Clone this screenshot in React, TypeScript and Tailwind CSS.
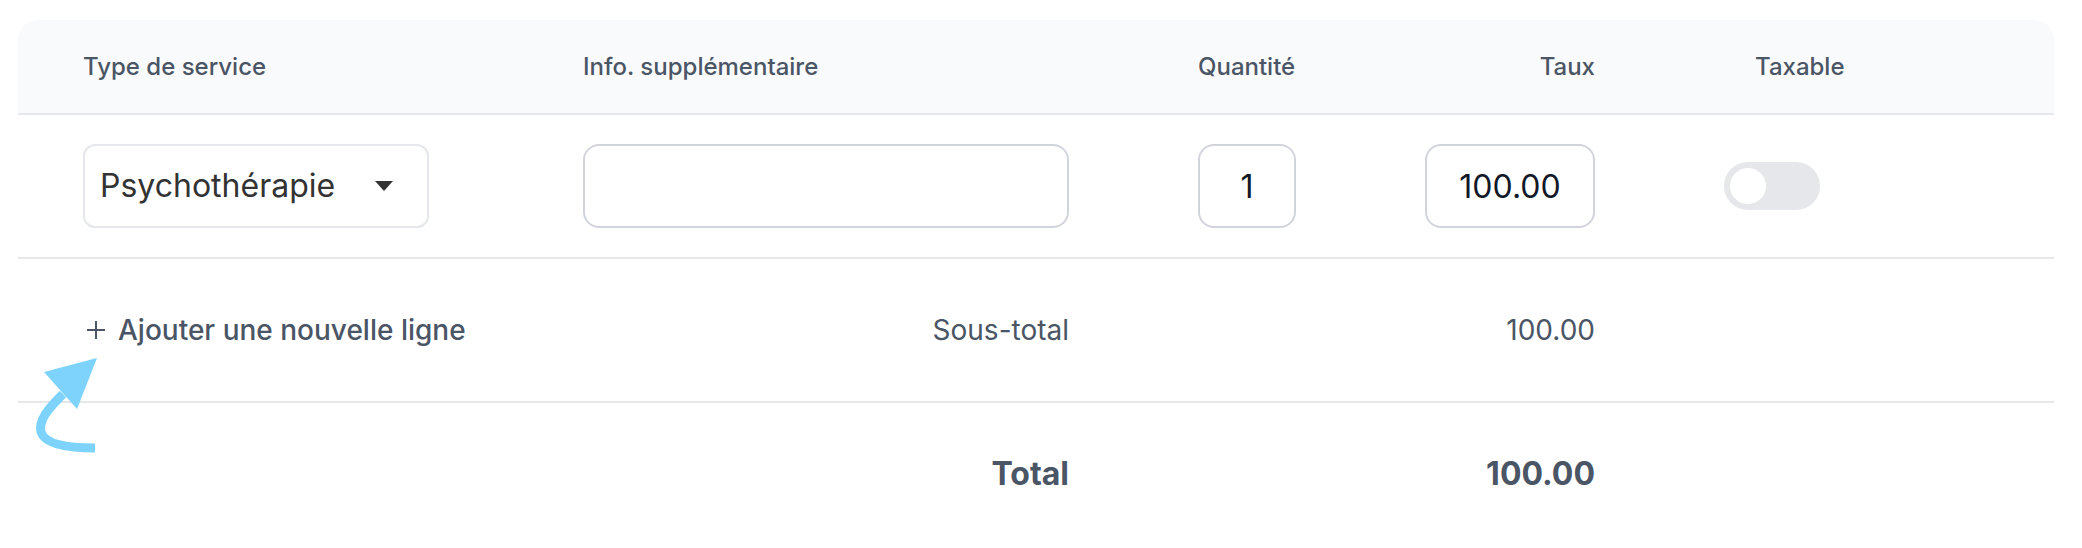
import { useState } from "react";

const row =
  "grid grid-cols-[371px_486px_98px_170px_1fr] gap-x-[129px] items-center pl-[65px]";

function Toggle() {
  const [on, setOn] = useState(false);
  return (
    <button
      type="button"
      onClick={() => setOn(!on)}
      className={`flex h-[48px] w-[96px] items-center rounded-full px-[6px] ${
        on ? "justify-end bg-sky-400" : "justify-start bg-[#e5e7eb]"
      }`}
    >
      <span className="h-[36px] w-[36px] rounded-full bg-white" />
    </button>
  );
}

export default function App() {
  return (
    <div className="relative h-[548px] w-[2082px] overflow-hidden bg-white pt-[20px] pl-[18px] font-['Inter',sans-serif]">
      <div className="w-[2036px]">
        {/* En-tête */}
        <div
          className={`${row} h-[95px] rounded-t-[20px] border-b-2 border-[#e5e7eb] bg-[#f9fafb] text-[24px] font-medium text-[#4a5565]`}
        >
          <span>Type de service</span>
          <span>Info. supplémentaire</span>
          <span>Quantité</span>
          <span className="justify-self-end">Taux</span>
          <span className="pl-[31px]">Taxable</span>
        </div>

        {/* Ligne de service */}
        <div className={`${row} h-[144px] border-b-2 border-[#e5e7eb]`}>
          <div className="flex h-[84px] w-[346px] items-center justify-between rounded-xl border-2 border-[#e5e7eb] pr-[34px] pl-[15px] text-[32px] text-[#333333]">
            <span>Psychothérapie</span>
            <svg width="18" height="10" viewBox="0 0 18 10" aria-hidden>
              <polygon points="0,0 18,0 9,10" fill="#333333" />
            </svg>
          </div>
          <input
            type="text"
            className="h-[84px] w-[486px] rounded-2xl border-2 border-[#d1d5db] px-4 text-[32px] outline-none"
          />
          <input
            type="text"
            defaultValue="1"
            className="h-[84px] w-[98px] rounded-2xl border-2 border-[#d1d5db] text-center text-[32px] text-[#111827] outline-none"
          />
          <input
            type="text"
            defaultValue="100.00"
            className="h-[84px] w-[170px] rounded-2xl border-2 border-[#d1d5db] text-center text-[32px] text-[#111827] outline-none"
          />
          <div>
            <Toggle />
          </div>
        </div>

        {/* Sous-total */}
        <div
          className={`${row} h-[144px] border-b-2 border-[#e5e7eb] text-[28px] text-[#4a5565]`}
        >
          <button
            type="button"
            className="flex w-max items-center gap-[13px] pl-[4px] font-medium whitespace-nowrap"
          >
            <svg
              className="shrink-0"
              width="18"
              height="18"
              viewBox="0 0 18 18"
              aria-hidden
            >
              <path
                d="M9 0v18M0 9h18"
                stroke="#4a5565"
                strokeWidth="2"
                fill="none"
              />
            </svg>
            Ajouter une nouvelle ligne
          </button>
          <span className="justify-self-end">Sous-total</span>
          <span />
          <span className="justify-self-end">100.00</span>
          <span />
        </div>

        {/* Total */}
        <div
          className={`${row} h-[142px] text-[32px] font-bold text-[#4a5565]`}
        >
          <span />
          <span className="justify-self-end">Total</span>
          <span />
          <span className="justify-self-end">100.00</span>
          <span />
        </div>
      </div>

      {/* Flèche d'annotation */}
      <svg
        className="pointer-events-none absolute top-[350px] left-0"
        width="110"
        height="110"
        viewBox="0 0 110 110"
        aria-hidden
      >
        <polygon points="44,22 97,8 77,59" fill="#7dd3fc" />
        <path
          d="M63 44 C49 58, 38 70, 41 82 C45 95, 70 98, 95 98"
          stroke="#7dd3fc"
          strokeWidth="9"
          fill="none"
        />
      </svg>
    </div>
  );
}
